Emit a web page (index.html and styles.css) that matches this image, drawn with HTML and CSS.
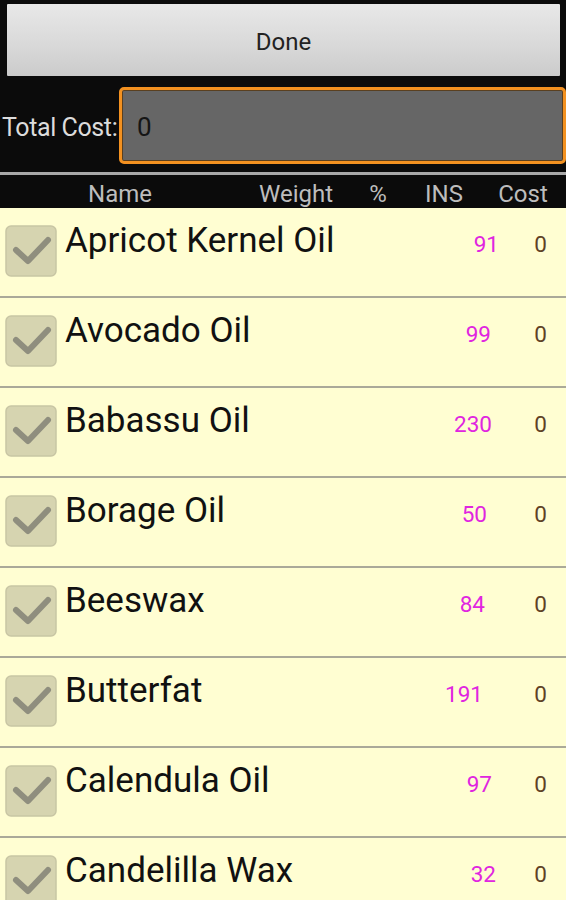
FILE: index.html
```html
<!DOCTYPE html>
<html lang="en">
<head>
  <meta charset="UTF-8">
  <meta name="viewport" content="width=device-width, initial-scale=1.0">
  <title>Oil Cost</title>
  <link rel="stylesheet" href="styles.css">
</head>
<body>
  <div class="cost-screen">

    <!-- Top controls -->
    <button class="done-btn">Done</button>
    <div class="total-row">
      <label class="total-label" for="total-cost">Total Cost:</label>
      <div class="total-input" id="total-cost">0</div>
    </div>

    <!-- Column headers -->
    <div class="list-header">
      <span>Name</span>
      <span>Weight</span>
      <span>%</span>
      <span>INS</span>
      <span>Cost</span>
    </div>

    <!-- Oil list -->
    <ul class="oil-list">
      <li class="oil-row">
        <svg class="check" viewBox="0 0 52 52"><rect x="1" y="1" width="50" height="50" rx="5"/><path d="M11 25 L23 36 L43 15"/></svg>
        <div class="oil-info"><span class="oil-name">Apricot Kernel Oil</span><span class="oil-ins">91</span><span class="oil-cost">0</span></div>
      </li>
      <li class="oil-row">
        <svg class="check" viewBox="0 0 52 52"><rect x="1" y="1" width="50" height="50" rx="5"/><path d="M11 25 L23 36 L43 15"/></svg>
        <div class="oil-info"><span class="oil-name">Avocado Oil</span><span class="oil-ins">99</span><span class="oil-cost">0</span></div>
      </li>
      <li class="oil-row">
        <svg class="check" viewBox="0 0 52 52"><rect x="1" y="1" width="50" height="50" rx="5"/><path d="M11 25 L23 36 L43 15"/></svg>
        <div class="oil-info"><span class="oil-name">Babassu Oil</span><span class="oil-ins">230</span><span class="oil-cost">0</span></div>
      </li>
      <li class="oil-row">
        <svg class="check" viewBox="0 0 52 52"><rect x="1" y="1" width="50" height="50" rx="5"/><path d="M11 25 L23 36 L43 15"/></svg>
        <div class="oil-info"><span class="oil-name">Borage Oil</span><span class="oil-ins">50</span><span class="oil-cost">0</span></div>
      </li>
      <li class="oil-row">
        <svg class="check" viewBox="0 0 52 52"><rect x="1" y="1" width="50" height="50" rx="5"/><path d="M11 25 L23 36 L43 15"/></svg>
        <div class="oil-info"><span class="oil-name">Beeswax</span><span class="oil-ins">84</span><span class="oil-cost">0</span></div>
      </li>
      <li class="oil-row">
        <svg class="check" viewBox="0 0 52 52"><rect x="1" y="1" width="50" height="50" rx="5"/><path d="M11 25 L23 36 L43 15"/></svg>
        <div class="oil-info"><span class="oil-name">Butterfat</span><span class="oil-ins">191</span><span class="oil-cost">0</span></div>
      </li>
      <li class="oil-row">
        <svg class="check" viewBox="0 0 52 52"><rect x="1" y="1" width="50" height="50" rx="5"/><path d="M11 25 L23 36 L43 15"/></svg>
        <div class="oil-info"><span class="oil-name">Calendula Oil</span><span class="oil-ins">97</span><span class="oil-cost">0</span></div>
      </li>
      <li class="oil-row">
        <svg class="check" viewBox="0 0 52 52"><rect x="1" y="1" width="50" height="50" rx="5"/><path d="M11 25 L23 36 L43 15"/></svg>
        <div class="oil-info"><span class="oil-name">Candelilla Wax</span><span class="oil-ins">32</span><span class="oil-cost">0</span></div>
      </li>
    </ul>
  </div>
</body>
</html>
```

FILE: styles.css
```css
html,
body {
  margin: 0;
  padding: 0;
  height: 100%;
  overflow: hidden;
  background-color: #0b0b0b;
  font-family: Roboto, "Liberation Sans", sans-serif;
}

.cost-screen {
  display: flex;
  flex-direction: column;
  padding-top: 4px;
}

.done-btn {
  display: block;
  margin: 0 6px 0 7px;
  height: 72px;
  padding-top: 4px;
  border: none;
  border-radius: 1px;
  background: linear-gradient(#e8e8e8, #d8d8d8 60%, #cbcbcb);
  color: #222;
  font-family: Roboto, "Liberation Sans", sans-serif;
  font-size: 24px;
}

/* total cost */
.total-row {
  display: flex;
  align-items: center;
  margin-top: 11px;
  height: 77px;
}

.total-label {
  width: 119px;
  padding: 3px 0 0 2px;
  box-sizing: border-box;
  color: #dcdcdc;
  font-size: 25px;
  letter-spacing: -0.4px;
  white-space: nowrap;
}

.total-input {
  flex: 1;
  height: 100%;
  box-sizing: border-box;
  display: flex;
  align-items: center;
  padding: 2px 0 0 15px;
  background-color: #666;
  border: 3px solid #f39120;
  border-radius: 5px;
  box-shadow: inset 0 0 0 1px #5a4020;
  color: #151515;
  font-size: 26px;
}

/* header */
.list-header {
  display: grid;
  grid-template-columns: 240px 112px 52px 80px 78px;
  margin-top: 8px;
  border-top: 3px solid #a8a8a8;
  height: 33px;
  padding-top: 4px;
  box-sizing: content-box;
  height: 29px;
  align-items: center;
  color: #bdbdbd;
  font-size: 24px;
}

.list-header span {
  text-align: center;
}

/* list */
.oil-list {
  list-style-type: none;
  margin: 0;
  padding: 0;
  background-color: #fffed2;
}

.oil-row {
  display: flex;
  align-items: flex-start;
  height: 88px;
  border-bottom: 2px solid #aaa999;
}

.check {
  flex: none;
  width: 52px;
  height: 52px;
  margin: 17px 8px 0 5px;
}

.check rect {
  fill: #d6d4b0;
  stroke: #c8c6a4;
  stroke-width: 1.5;
}

.check path {
  fill: none;
  stroke: #8f8e7e;
  stroke-width: 6;
  stroke-linecap: round;
  stroke-linejoin: round;
}

.oil-info {
  flex: 1;
  display: flex;
  align-items: baseline;
  margin-top: 12px;
  padding-right: 19px;
}

.oil-name {
  flex: 1;
  color: #111;
  font-size: 35px;
  line-height: 42px;
  white-space: nowrap;
}

.oil-ins {
  color: #e025e0;
  font-size: 22.5px;
}

.oil-cost {
  width: 13px;
  text-align: right;
  color: #5e4226;
  font-size: 22.5px;
}

/* INS values sit at uneven spots in each row */
.oil-row:nth-child(1) .oil-ins { margin-right: 35px; }
.oil-row:nth-child(2) .oil-ins { margin-right: 43px; }
.oil-row:nth-child(3) .oil-ins { margin-right: 42px; }
.oil-row:nth-child(4) .oil-ins { margin-right: 47px; }
.oil-row:nth-child(5) .oil-ins { margin-right: 49px; }
.oil-row:nth-child(6) .oil-ins { margin-right: 51px; }
.oil-row:nth-child(7) .oil-ins { margin-right: 42px; }
.oil-row:nth-child(8) .oil-ins { margin-right: 38px; }
```
